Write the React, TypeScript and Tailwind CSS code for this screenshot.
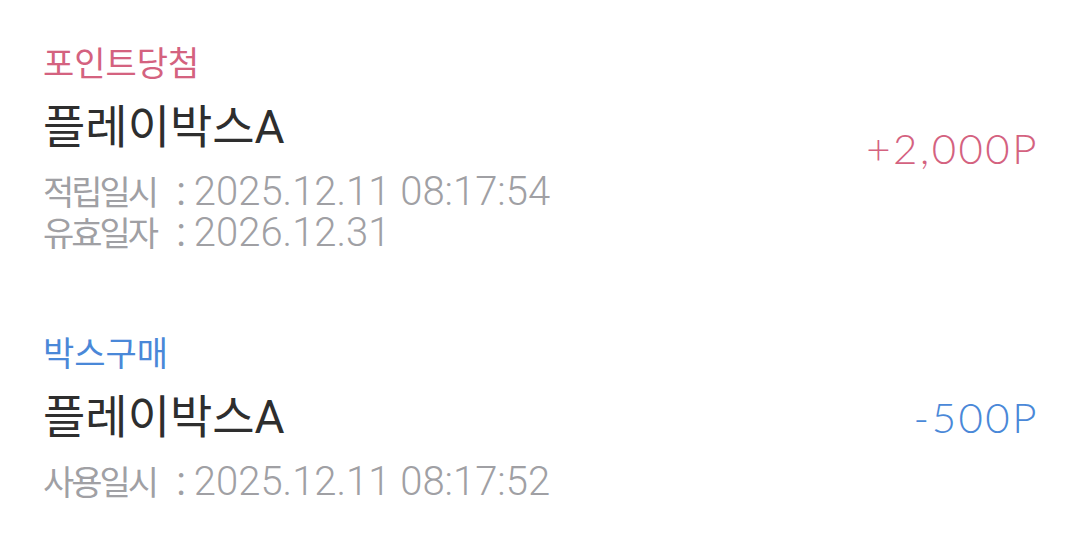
import React from "react";

type Detail = { k: string; v: string };
type Item = {
  label: string;
  color: string;
  title: string;
  details: Detail[];
  amount: string;
};

const items: Item[] = [
  {
    label: "포인트당첨",
    color: "text-[#d4627f]",
    title: "플레이박스",
    details: [
      { k: "적립일시", v: "2025.12.11 08:17:54" },
      { k: "유효일자", v: "2026.12.31" },
    ],
    amount: "+2,000P",
  },
  {
    label: "박스구매",
    color: "text-[#4a88d8]",
    title: "플레이박스",
    details: [{ k: "사용일시", v: "2025.12.11 08:17:52" }],
    amount: "-500P",
  },
];

const kr = "font-['Noto_Sans_CJK_KR','Noto_Sans',sans-serif]";
const roboto = "font-['Roboto','Noto_Sans_CJK_KR',sans-serif]";

export default function App() {
  return (
    <div className="w-[1080px] h-[547px] bg-white overflow-hidden pt-[42px]">
      {items.map((it, i) => (
        <div
          key={i}
          className={`flex items-center justify-between pl-[43px] pr-[41px] ${i === 0 ? "pb-[79px]" : ""}`}
        >
          <div className="flex flex-col">
            <div className={`${kr} ${it.color} text-[34px] leading-[40px]`}>{it.label}</div>
            <div className={`${roboto} text-[#2e2e2e] text-[46px] leading-[46px] mt-[22px] whitespace-nowrap`}>
              <span className={`${kr} text-[46px] leading-[20px]`}>{it.title}</span>
              <span>A</span>
            </div>
            <div className="mt-[21px] flex flex-col">
              {it.details.map((d, j) => (
                <div
                  key={j}
                  className={`${roboto} font-light text-[#a0a0a4] text-[40px] leading-[41px] whitespace-nowrap`}
                >
                  <span className={`${kr} font-normal text-[34px] leading-[20px] tracking-[-3px]`}>{d.k}</span>
                  <span className="ml-[20px] font-normal">:</span>
                  <span className="ml-[8px]">{d.v}</span>
                </div>
              ))}
            </div>
          </div>
          <div
            className={`font-['Lato','Noto_Sans',sans-serif] font-light ${it.color} text-[42px] leading-[50px] tracking-[2.5px] whitespace-nowrap`}
          >
            {it.amount}
          </div>
        </div>
      ))}
    </div>
  );
}
